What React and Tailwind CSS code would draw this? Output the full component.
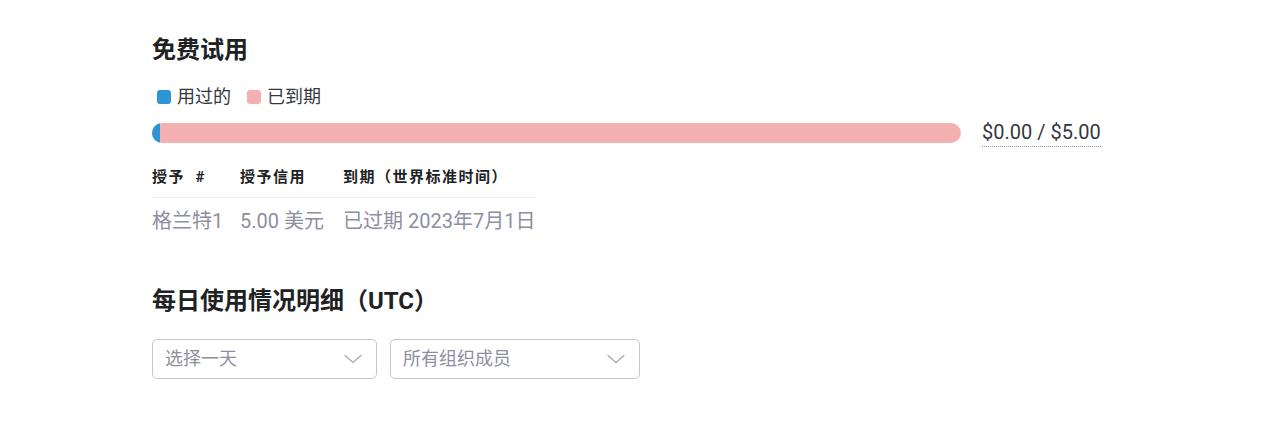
import React from 'react';

const font = { fontFamily: 'Roboto, "Noto Sans CJK SC", "Noto Sans", sans-serif' };

const Chevron = () => (
  <svg width="18" height="10" viewBox="0 0 18 10" fill="none" className="shrink-0">
    <path d="M1 1.5 L9 8.5 L17 1.5" stroke="#a9a9b6" strokeWidth="1.3" strokeLinecap="round" strokeLinejoin="round" />
  </svg>
);

const Select = ({ label, width }) => (
  <div className={`flex h-10 items-center justify-between rounded-[5px] border border-[#c5c5d2] bg-white pl-3 pr-[14px] ${width}`}>
    <span className="text-[18px] leading-6 text-[#8e8ea0]">{label}</span>
    <Chevron />
  </div>
);

export default function App() {
  const used = 0;
  const total = 5;

  return (
    <div className="min-h-[441px] bg-white pl-[152px] pt-[34px] text-[#202123]" style={font}>
      <div className="w-[950px]">
        <h2 className="text-[24px] font-bold leading-8">免费试用</h2>

        <div className="mt-[19px] flex items-center gap-4 text-[18px] leading-6 text-[#353740]">
          <div className="flex items-center gap-[6px]">
            <span className="ml-[5px] inline-block h-[14px] w-[14px] rounded-[3px] bg-[#2d95d4]" />
            <span>用过的</span>
          </div>
          <div className="flex items-center gap-[6px]">
            <span className="inline-block h-[14px] w-[14px] rounded-[3px] bg-[#f5b1b2]" />
            <span>已到期</span>
          </div>
        </div>

        <div className="mt-[9px] flex items-center gap-[21px]">
          <div className="flex h-5 w-[809px] overflow-hidden rounded-full bg-[#f5b1b2]">
            <div className="h-full w-2 bg-[#2d95d4]" />
          </div>
          <span className="border-b border-dotted border-[#8e8ea0] text-[20px] leading-7 text-[#353740]">
            ${used.toFixed(2)} / ${total.toFixed(2)}
          </span>
        </div>

        <div className="mt-5 inline-grid grid-cols-[88px_103px_auto]">
          <div className="border-b border-[#ececf1] pb-[10px] text-[15px] font-bold leading-5 tracking-[1.5px]">授予&nbsp; #</div>
          <div className="border-b border-[#ececf1] pb-[10px] text-[15px] font-bold leading-5 tracking-[1.5px]">授予信用</div>
          <div className="border-b border-[#ececf1] pb-[10px] text-[15px] font-bold leading-5 tracking-[1.5px]">到期（世界标准时间）</div>
          <div className="pt-[9px] text-[20px] leading-7 text-[#8e8ea0]">格兰特1</div>
          <div className="pt-[9px] text-[20px] leading-7 text-[#8e8ea0]">5.00 美元</div>
          <div className="pt-[9px] text-[20px] leading-7 text-[#8e8ea0]">已过期 2023年7月1日</div>
        </div>

        <h2 className="mt-[50px] text-[24px] font-bold leading-8">每日使用情况明细（UTC）</h2>

        <div className="mt-[22px] flex gap-[13px]">
          <Select label="选择一天" width="w-[225px]" />
          <Select label="所有组织成员" width="w-[250px]" />
        </div>
      </div>
    </div>
  );
}
